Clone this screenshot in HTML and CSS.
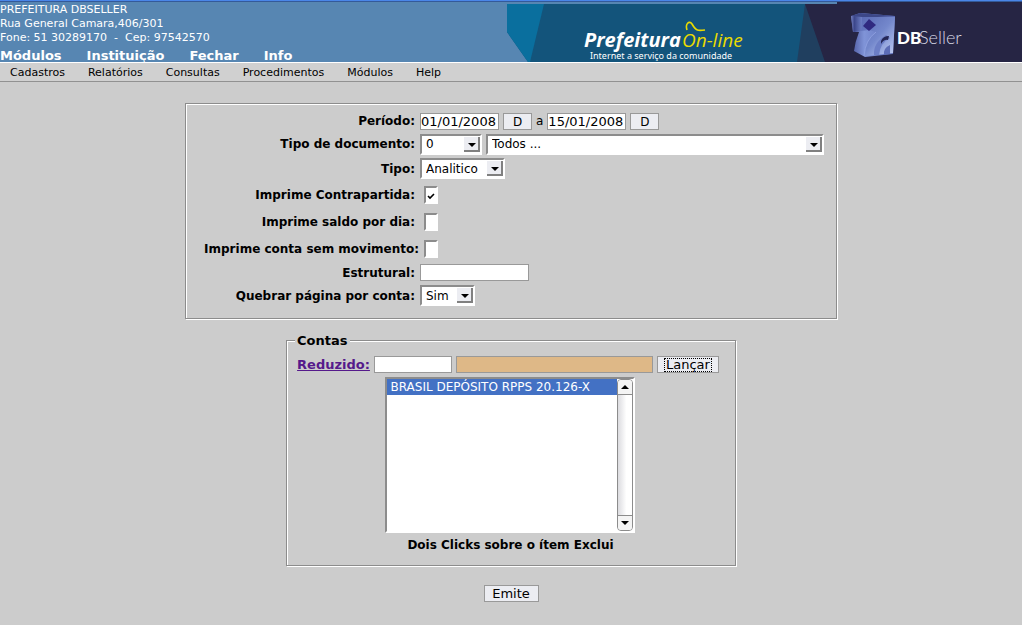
FILE: index.html
```html
<!DOCTYPE html>
<html lang="pt-BR">
<head>
<meta charset="utf-8">
<title>Prefeitura On-line</title>
<link rel="stylesheet" href="styles.css">
</head>
<body>
<header class="top">
  <div class="org">
    <address class="address">PREFEITURA DBSELLER<br>Rua General Camara,406/301<br>Fone: 51 30289170 &nbsp;-&nbsp; Cep: 97542570</address>
    <nav class="main-nav">
      <a href="#">Módulos</a>
      <a href="#">Instituição</a>
      <a href="#">Fechar</a>
      <a href="#">Info</a>
    </nav>
  </div>
  <svg class="banner" width="515" height="60" viewBox="0 0 515 60">
    <defs>
      <linearGradient id="face" x1="0" y1="0" x2="1" y2="1">
        <stop offset="0" stop-color="#5a6ab4"/><stop offset=".5" stop-color="#7488cc"/><stop offset="1" stop-color="#c4d0f6"/>
      </linearGradient>
      <linearGradient id="side" x1="0" y1="0" x2="1" y2="0">
        <stop offset="0" stop-color="#4a569c"/><stop offset=".3" stop-color="#8094d8"/><stop offset="1" stop-color="#5a6ab4"/>
      </linearGradient>
      <linearGradient id="edge" x1="0" x2="1">
        <stop offset="0" stop-color="#7a86c4"/><stop offset=".3" stop-color="#3b468a"/><stop offset="1" stop-color="#6f80c6"/>
      </linearGradient>
    </defs>
    <path d="M0 2H330V60H21L0 30Z" fill="#13547b"/>
    <path d="M0 2H37L23 60H21L0 30Z" fill="#0a6f9e"/>
    <path d="M298 2H330V60H290Z" fill="#203f5f"/>
    <path d="M298 2H330V0H515V60H318Z" fill="#262544"/>
    <text class="brand" x="77" y="45">Prefeitura</text>
    <text class="brand-alt" x="175" y="45">On-line</text>
    <path d="M180 28C178 22 182 18 185 22C189 29 191 29 198 28" fill="none" stroke="#eadb00" stroke-width="1.6"/>
    <text class="tagline" x="83" y="57">Internet a serviço da comunidade</text>
    <path d="M344 14L353 11L388 14L386 52L358 55L347 49Q348 40 352 30L346 30Z" fill="url(#side)"/>
    <path d="M344 14L353 11L388 14L354 16Z" fill="#3c4788"/>
    <path d="M344 14L355 15L354 29L346 30Z" fill="url(#edge)"/>
    <path d="M355 15L388 15L386 51L358 54Q358 39 369 30L362 28L354 29Z" fill="url(#face)"/>
    <path d="M369 30Q358 38 357 54" fill="none" stroke="#8c9ede" stroke-width="1"/>
    <path d="M367 53Q366 41 379 33L383 36Q373 41 372 53Z" fill="#6c7ec6"/>
    <path d="M377 53Q376 46 383 43L383 52Z" fill="#5c6cb6"/>
    <path d="M374 39Q376 34 382 34L381 38Q377 37 374 42Z" fill="#252756"/>
    <path d="M362 17L369 23L362 29L356 24Z" fill="#302a80"/>
    <text class="db" x="390" y="42">DB</text>
    <text class="seller" x="412" y="42">Seller</text>
  </svg>
</header>
<nav class="menu">
  <a href="#">Cadastros</a>
  <a href="#">Relatórios</a>
  <a href="#">Consultas</a>
  <a href="#">Procedimentos</a>
  <a href="#">Módulos</a>
  <a href="#">Help</a>
</nav>
<main>
  <form class="report">
    <fieldset class="box filters">
      <label class="lead" for="inicio">Período:</label>
      <div class="controls">
        <input class="text date" id="inicio" type="text" value="01/01/2008">
        <button class="btn day" type="button">D</button>
        <label class="between" for="fim">a</label>
        <input class="text date" id="fim" type="text" value="15/01/2008">
        <button class="btn day" type="button">D</button>
      </div>
      <label class="lead" for="tipodoc">Tipo de documento:</label>
      <div class="controls">
        <select class="drop code" id="tipodoc"><option>0</option></select>
        <select class="drop wide" aria-label="Descrição do tipo de documento"><option>Todos ...</option></select>
      </div>
      <label class="lead" for="tipo">Tipo:</label>
      <div class="controls"><select class="drop kind" id="tipo"><option>Analitico</option></select></div>
      <label class="lead" for="contrapartida">Imprime Contrapartida:</label>
      <div class="controls"><input class="check" id="contrapartida" type="checkbox" checked></div>
      <label class="lead" for="saldo">Imprime saldo por dia:</label>
      <div class="controls"><input class="check" id="saldo" type="checkbox"></div>
      <label class="lead flush" for="semmov">Imprime conta sem movimento:</label>
      <div class="controls"><input class="check" id="semmov" type="checkbox"></div>
      <label class="lead" for="estrutural">Estrutural:</label>
      <div class="controls"><input class="text structure" id="estrutural" type="text"></div>
      <label class="lead" for="quebrar">Quebrar página por conta:</label>
      <div class="controls"><select class="drop yes" id="quebrar"><option>Sim</option></select></div>
    </fieldset>

    <fieldset class="box accounts">
      <legend>Contas</legend>
      <div class="lookup">
        <a class="lookup-link" href="#" id="reduzido-label">Reduzido:</a>
        <input class="text reduced" type="text" aria-labelledby="reduzido-label">
        <input class="text desc" type="text" readonly aria-label="Descrição da conta">
        <button class="btn add" type="button"><span>Lançar</span></button>
      </div>
      <div class="list">
        <select class="list-box" size="9" aria-label="Contas selecionadas"><option selected>BRASIL DEPÓSITO RPPS 20.126-X</option></select>
        <div class="scroll" aria-hidden="true">
          <span class="arrow"><svg width="8" height="4"><path d="M4 0L8 4H0Z"/></svg></span>
          <span class="arrow down"><svg width="8" height="4"><path d="M0 0H8L4 4Z"/></svg></span>
        </div>
      </div>
      <p class="hint">Dois Clicks sobre o ítem Exclui</p>
    </fieldset>
    <button class="btn emit" type="button">Emite</button>
  </form>
</main>
</body>
</html>
```

FILE: styles.css
```css
* { box-sizing: border-box; }

body {
  margin: 0;
  background: #ccc;
  color: #000;
  font: 12px/16px "DejaVu Sans", sans-serif;
}

a { color: inherit; text-decoration: none; }

.top {
  display: flex;
  justify-content: space-between;
  height: 62px;
  border-top: 1px solid #4a86e8;
  box-shadow: inset 0 1px #345a99;
  background: #5786b2;
  color: #fff;
}

.org { display: flex; flex-direction: column; justify-content: space-between; }

.address {
  padding-top: 2px;
  font-style: normal;
  font-size: 11px;
  line-height: 14px;
  white-space: nowrap;
}

.main-nav { display: flex; gap: 25px; font-size: 13px; font-weight: bold; line-height: 12px; }

.banner { display: block; flex: none; align-self: flex-end; }
.brand { font: italic bold 20px "Open Sans", sans-serif; fill: #fff; }
.brand-alt { font: italic 19px "Open Sans", sans-serif; fill: #eadb00; }
.tagline { font: 9px "Noto Sans", sans-serif; fill: #fff; }
.db { font: 900 17px Lato, sans-serif; fill: #fff; }
.seller { font: 300 18px Lato, sans-serif; fill: #d8d8e4; }

.menu {
  display: flex;
  gap: 23px;
  padding: 1px 10px 0;
  border-top: 1px solid #fff;
  border-bottom: 1px solid #919191;
  background: #d0d0d0;
  font-size: 11px;
  line-height: 17px;
}

.report {
  display: flex;
  flex-direction: column;
  align-items: center;
  padding-top: 21px;
}

.box {
  margin: 0;
  min-width: 0;
  border: 1px solid #8c8c8c;
  box-shadow: 1px 1px #fff, inset 1px 1px #fff;
}

.filters {
  display: grid;
  grid-template-columns: minmax(220px, auto) auto;
  grid-template-rows: 22px 24px 25px 27px 27px 27px 21px 25px;
  align-items: center;
  padding: 6px 12px 10px 14px;
}

.lead { padding-right: 5px; font-weight: bold; text-align: right; }
.flush { padding-right: 1px; }

.controls { display: flex; align-items: center; gap: 4px; }

.text, .btn {
  height: 17px;
  margin: 0;
  padding: 1px 0 0;
  border: 1px solid #999;
  border-radius: 0;
  color: #000;
  font: 12px/14px "DejaVu Sans", sans-serif;
}

.text { background: #fff; }
.btn { background: #ecedf2; }
.date { width: 79px; }
.day { width: 29px; }
.structure { width: 109px; }

.drop {
  appearance: none;
  height: 21px;
  margin: 0;
  padding: 0 20px 0 4px;
  border: 2px solid;
  border-color: #8c8c8c #fff #fff #8c8c8c;
  border-radius: 0;
  background: #fff url("data:image/svg+xml,%3Csvg xmlns='http://www.w3.org/2000/svg' width='16' height='17'%3E%3Cpath fill='%23ecedf2' d='M0 1H15V16H0z'/%3E%3Cpath fill='%23808080' d='M14 1H16V16H0V14H14z'/%3E%3Cpath d='M4 7H12L8 11z'/%3E%3C/svg%3E") right center no-repeat;
  color: #000;
  font: 12px/16px "DejaVu Sans", sans-serif;
}

.code { width: 62px; }
.wide { width: 338px; }
.kind { width: 85px; }
.yes { width: 55px; }

.check {
  appearance: none;
  width: 14px;
  height: 18px;
  margin: 0 4px;
  border: 2px solid;
  border-color: #8c8c8c #fff #fff #8c8c8c;
  background: #fff;
}

.check:checked {
  background: #fff url("data:image/svg+xml,%3Csvg xmlns='http://www.w3.org/2000/svg' width='8' height='8'%3E%3Cpath d='M1 4L3 6L7 2' fill='none' stroke='%23000' stroke-width='1.6'/%3E%3C/svg%3E") center bottom 2px no-repeat;
}

.accounts { margin-top: 12px; padding: 7px 11px 12px 10px; }
.accounts legend { padding: 2px 2px 0; margin-left: -2px; background: #ccc; font-size: 13px; font-weight: bold; line-height: 16px; }

.lookup { display: flex; align-items: center; gap: 4px; padding-right: 5px; }
.lookup-link { color: #551a8b; font-size: 13px; font-weight: bold; line-height: 17px; text-decoration: underline; }
.reduced { width: 78px; }
.desc { width: 197px; background: #deb887; }
.add { display: flex; justify-content: center; width: 62px; }
.add span { padding: 0 2px; outline: 1px dotted #000; outline-offset: -1px; }
.add, .emit, .date { font-size: 13px; }

.list {
  display: flex;
  width: 250px;
  height: 156px;
  margin: 4px auto 0;
  border: 2px solid;
  border-color: #8c8c8c #fff #fff #8c8c8c;
  background: #fff;
}

.list-box {
  flex: 1;
  min-width: 0;
  padding: 0;
  border: 0;
  border-radius: 0;
  outline: 0;
  background: #fff;
  font: 12px/15px "DejaVu Sans", sans-serif;
  overflow: hidden;
}

.list-box option { min-height: 16px; padding: 1px 3px 0; }
.list-box option:checked {
  background: #4371c4 linear-gradient(#4371c4, #4371c4);
  color: #fff;
  -webkit-text-fill-color: #fff;
}

.scroll {
  display: flex;
  flex-direction: column;
  justify-content: space-between;
  width: 16px;
  border: 1px solid #8c8c8c;
  border-radius: 4px;
  background: linear-gradient(90deg, #dcdce0, #fff 60%);
  overflow: hidden;
}

.arrow { display: flex; align-items: center; justify-content: center; height: 15px; border-bottom: 1px solid #8c8c8c; background: #f4f4f4; }
.down { border-top: 1px solid #8c8c8c; border-bottom: 0; }

.hint { margin: 4px 0 0; font-weight: bold; text-align: center; }
.emit { width: 55px; margin-top: 19px; }
```
